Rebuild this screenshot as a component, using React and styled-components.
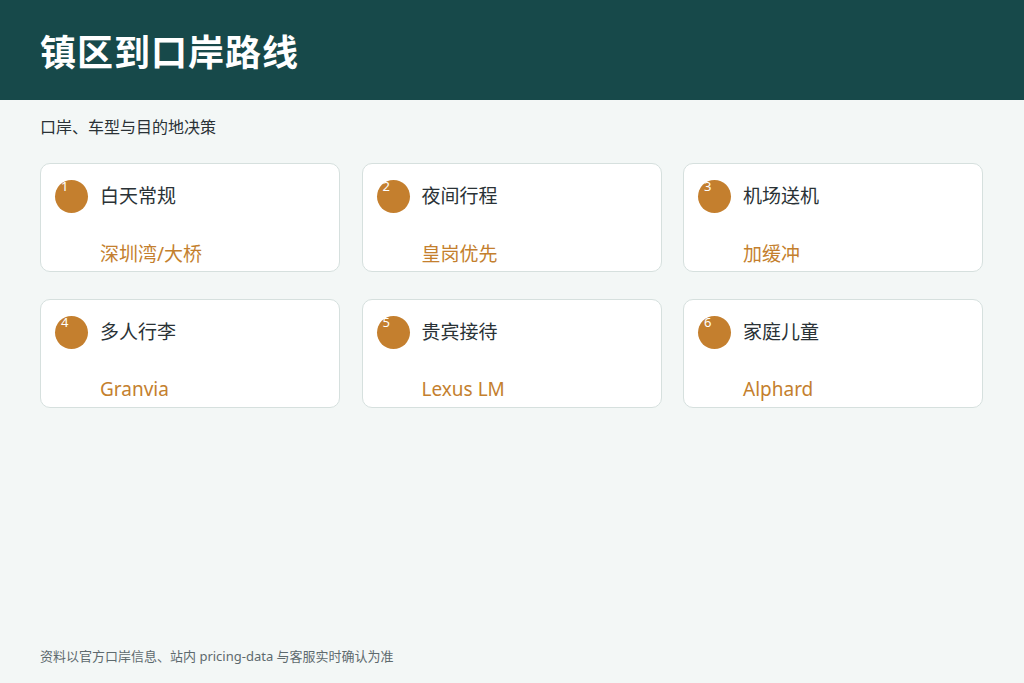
import React from "react";
import styled, { createGlobalStyle } from "styled-components";

const Global = createGlobalStyle`
  html, body { margin: 0; padding: 0; }
  body {
    background: #f3f7f6;
    font-family: "Noto Sans", "Noto Sans CJK SC", sans-serif;
  }
`;

const Page = styled.div`
  width: 1024px;
  height: 683px;
  display: flex;
  flex-direction: column;
  background: #f3f7f6;
`;

const Header = styled.header`
  height: 100px;
  background: #17494a;
  display: flex;
  align-items: center;
  padding: 0 40px;
  box-sizing: border-box;
`;

const Title = styled.h1`
  margin: 0;
  color: #fff;
  font-size: 36px;
  font-weight: 700;
  letter-spacing: 1px;
`;

const Subtitle = styled.p`
  margin: 14px 40px 0;
  font-size: 16px;
  color: #2a3236;
`;

const Grid = styled.div`
  display: grid;
  grid-template-columns: repeat(3, 300px);
  column-gap: 21.5px;
  row-gap: 27px;
  margin: 25px 40px 0;
`;

const Card = styled.div`
  height: 109px;
  box-sizing: border-box;
  background: #fff;
  border: 1px solid #d6e0de;
  border-radius: 10px;
  padding: 16px 14px 0;
  display: grid;
  grid-template-columns: 33px 1fr;
  column-gap: 12px;
`;

const Badge = styled.div`
  position: relative;
  width: 33px;
  height: 33px;
  border-radius: 50%;
  background: #c47f2e;
`;

const BadgeNum = styled.span`
  position: absolute;
  left: 6px;
  top: -2px;
  color: #fff;
  font-size: 13px;
  line-height: 16px;
`;

const Name = styled.div`
  font-size: 19px;
  line-height: 33px;
  color: #2a3236;
`;

const Value = styled.div`
  grid-column: 2;
  margin-top: 22px;
  font-size: 19px;
  color: #c47f2e;
`;

const Footer = styled.footer`
  margin-top: auto;
  padding: 0 40px 18px;
  font-size: 13px;
  color: #5e6a6e;
`;

const items = [
  ["白天常规", "深圳湾/大桥"],
  ["夜间行程", "皇岗优先"],
  ["机场送机", "加缓冲"],
  ["多人行李", "Granvia"],
  ["贵宾接待", "Lexus LM"],
  ["家庭儿童", "Alphard"],
];

export default function App() {
  return (
    <Page>
      <Global />
      <Header>
        <Title>镇区到口岸路线</Title>
      </Header>
      <Subtitle>口岸、车型与目的地决策</Subtitle>
      <Grid>
        {items.map(([name, value], i) => (
          <Card key={name}>
            <Badge>
              <BadgeNum>{i + 1}</BadgeNum>
            </Badge>
            <Name>{name}</Name>
            <Value>{value}</Value>
          </Card>
        ))}
      </Grid>
      <Footer>资料以官方口岸信息、站内 pricing-data 与客服实时确认为准</Footer>
    </Page>
  );
}
